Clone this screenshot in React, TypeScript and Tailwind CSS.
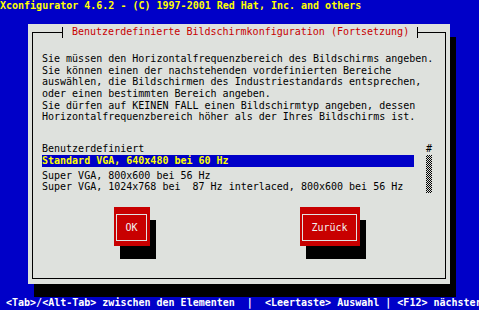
const paragraph = [
  'Sie müssen den Horizontalfrequenzbereich des Bildschirms angeben.',
  'Sie können einen der nachstehenden vordefinierten Bereiche',
  'auswählen, die Bildschirmen des Industriestandards entsprechen,',
  'oder einen bestimmten Bereich angeben.',
  'Sie dürfen auf KEINEN FALL einen Bildschirmtyp angeben, dessen',
  'Horizontalfrequenzbereich höher als der Ihres Bildschirms ist.',
]

function Button({ label, width, inner }: { label: string; width: string; inner: string }) {
  return (
    <div className={`${width} h-[39px] bg-[#c80000] pt-[7px] pl-[2px] shadow-[6px_13px_0_0_#000]`}>
      <div
        className={`${inner} h-[27px] border border-[#e2e2e2] flex items-center justify-center text-[#f2f2f2] leading-[12px]`}
      >
        {label}
      </div>
    </div>
  )
}

export default function App() {
  return (
    <div className="w-[479px] h-[310px] bg-[#0000c8] overflow-hidden flex flex-col font-['DejaVu_Sans_Mono','Liberation_Mono',monospace] text-[10px]">
      <div className="h-[24px] leading-[12px] font-bold text-[#ffff00] whitespace-pre">
        Xconfigurator 4.6.2 - (C) 1997-2001 Red Hat, Inc. and others
      </div>

      <div className="ml-[28px] w-[422px] h-[260px] shrink-0 bg-[#dee1dd] shadow-[6px_13px_0_0_#000] pt-[8px] px-[4px] pb-[5px]">
        <div className="relative h-full border border-black pt-[20px] pl-[9px] text-black">
          <div className="absolute left-[29px] top-[-6px] h-[11px] border-l border-r border-black bg-[#dee1dd] pl-[9px] pr-[8px] leading-[9px] text-[#c80000] whitespace-pre">
            Benutzerdefinierte Bildschirmkonfiguration (Fortsetzung)
          </div>

          <div className="leading-[11.67px] whitespace-pre">
            {paragraph.map((line, i) => (
              <div key={i}>{line}</div>
            ))}
          </div>

          <div className="mt-[20px] flex">
            <div className="w-[372px] whitespace-pre">
              <div className="h-[12px] leading-[12px]">Benutzerdefiniert</div>
              <div className="h-[12px] leading-[12px] bg-[#0000c8] text-[#ffff00] font-bold">
                Standard VGA, 640x480 bei 60 Hz
              </div>
              <div className="mt-[2.67px] h-[11.67px] leading-[11.67px]">Super VGA, 800x600 bei 56 Hz</div>
              <div className="h-[11.67px] leading-[11.67px]">
                Super VGA, 1024x768 bei  87 Hz interlaced, 800x600 bei 56 Hz
              </div>
            </div>
            <div className="ml-[12px] w-[6px]">
              <div className="h-[12px] leading-[12px] text-center">#</div>
              <div className="h-[38px] w-[6px] bg-[image:repeating-conic-gradient(#000_0%_25%,#dee1dd_0%_50%)] bg-[length:2px_2px]" />
            </div>
          </div>

          <div className="mt-[14px] flex">
            <div className="ml-[72px]">
              <Button label="OK" width="w-[36px]" inner="w-[31px]" />
            </div>
            <div className="ml-[150px]">
              <Button label="Zurück" width="w-[60px]" inner="w-[55px]" />
            </div>
          </div>
        </div>
      </div>

      <div className="mt-auto h-[13px] leading-[12px] font-bold text-white whitespace-pre overflow-hidden">
        {' <Tab>/<Alt-Tab> zwischen den Elementen  |  <Leertaste> Auswahl | <F12> nächster Bildschirm'}
      </div>
    </div>
  )
}
